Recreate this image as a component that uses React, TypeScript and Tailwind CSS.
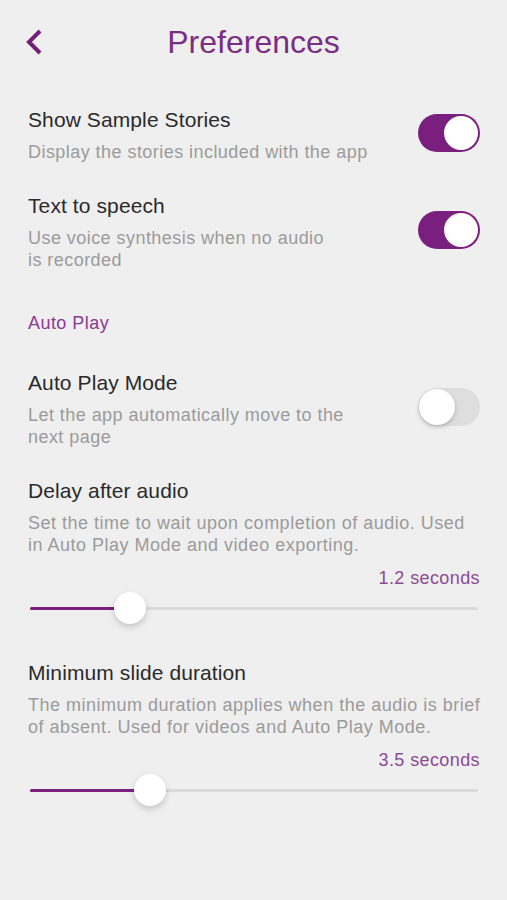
import React from "react";

const font = { fontFamily: '"Liberation Sans", Arial, sans-serif' };

function Toggle({ on }: { on: boolean }) {
  return (
    <div
      className={
        on
          ? "relative -mt-[4px] h-[38px] w-[62px] shrink-0 rounded-full bg-[#7a1f7e]"
          : "relative -mt-[4px] h-[38px] w-[62px] shrink-0 rounded-full bg-[#dedede]"
      }
    >
      <div
        className={
          on
            ? "absolute right-[2px] top-[2px] h-[34px] w-[34px] rounded-full bg-white"
            : "absolute left-[1px] top-[1px] h-[36px] w-[36px] rounded-full bg-white shadow-[0_2px_4px_rgba(0,0,0,0.22)]"
        }
      />
    </div>
  );
}

function ToggleRow({ title, lines, on, className }: { title: string; lines: string[]; on: boolean; className: string }) {
  return (
    <div className={"flex items-center justify-between " + className}>
      <div>
        <div className="text-[21px] leading-[26px] tracking-[0.1px] text-[#2a2a2a]">{title}</div>
        <div className="mt-2 text-[18px] leading-[22px] tracking-[0.45px] text-[#9b9b9b]">
          {lines.map((l, i) => (
            <div key={i}>{l}</div>
          ))}
        </div>
      </div>
      <Toggle on={on} />
    </div>
  );
}

function SliderRow({ title, lines, value, pct, className }: { title: string; lines: string[]; value: string; pct: number; className: string }) {
  return (
    <div className={className}>
      <div className="text-[21px] leading-[26px] tracking-[0.1px] text-[#2a2a2a]">{title}</div>
      <div className="mt-2 text-[18px] leading-[22px] tracking-[0.5px] text-[#9b9b9b]">
        {lines.map((l, i) => (
          <div key={i} className="whitespace-nowrap">{l}</div>
        ))}
      </div>
      <div className="mt-[11px] text-right text-[18px] leading-[22px] tracking-[0.4px] text-[#8c4a93]">{value}</div>
      <div className="relative mx-[2px] mt-[3px] flex h-[32px] items-center">
        <div className="relative h-[3px] w-full rounded-full bg-[#dadada]">
          <div className="absolute left-0 top-0 h-[3px] rounded-full bg-[#7a1f7e]" style={{ width: pct + "%" }} />
        </div>
        <div
          className="absolute top-0 h-[32px] w-[32px] -translate-x-1/2 rounded-full bg-white shadow-[0_3px_6px_rgba(0,0,0,0.18)]"
          style={{ left: pct + "%" }}
        />
      </div>
    </div>
  );
}

export default function App() {
  return (
    <div className="min-h-[900px] w-full bg-[#efefef] pt-[22px]" style={font}>
      <div className="relative flex h-[40px] items-center justify-center">
        <svg className="absolute left-[25px] top-[7px]" width="20" height="26" viewBox="0 0 20 26">
          <polyline points="15,2 4,13 15,24" fill="none" stroke="#74207a" strokeWidth="4" strokeLinejoin="miter" />
        </svg>
        <div className="text-[32px] leading-[40px] text-[#7b2d84]">Preferences</div>
      </div>

      <div className="pl-[28px] pr-[27px]">
        <ToggleRow
          className="mt-[45px]"
          title="Show Sample Stories"
          lines={["Display the stories included with the app"]}
          on
        />
        <ToggleRow
          className="mt-[30px]"
          title="Text to speech"
          lines={["Use voice synthesis when no audio", "is recorded"]}
          on
        />
        <div className="mt-[41px] text-[18px] leading-[22px] tracking-[0.45px] text-[#8a3a92]">Auto Play</div>
        <ToggleRow
          className="mt-[36px]"
          title="Auto Play Mode"
          lines={["Let the app automatically move to the", "next page"]}
          on={false}
        />
        <SliderRow
          className="mt-[30px]"
          title="Delay after audio"
          lines={["Set the time to wait upon completion of audio. Used", "in Auto Play Mode and video exporting."]}
          value="1.2 seconds"
          pct={22.3}
        />
        <SliderRow
          className="mt-[36px]"
          title="Minimum slide duration"
          lines={["The minimum duration applies when the audio is brief", "of absent. Used for videos and Auto Play Mode."]}
          value="3.5 seconds"
          pct={26.8}
        />
      </div>
    </div>
  );
}
